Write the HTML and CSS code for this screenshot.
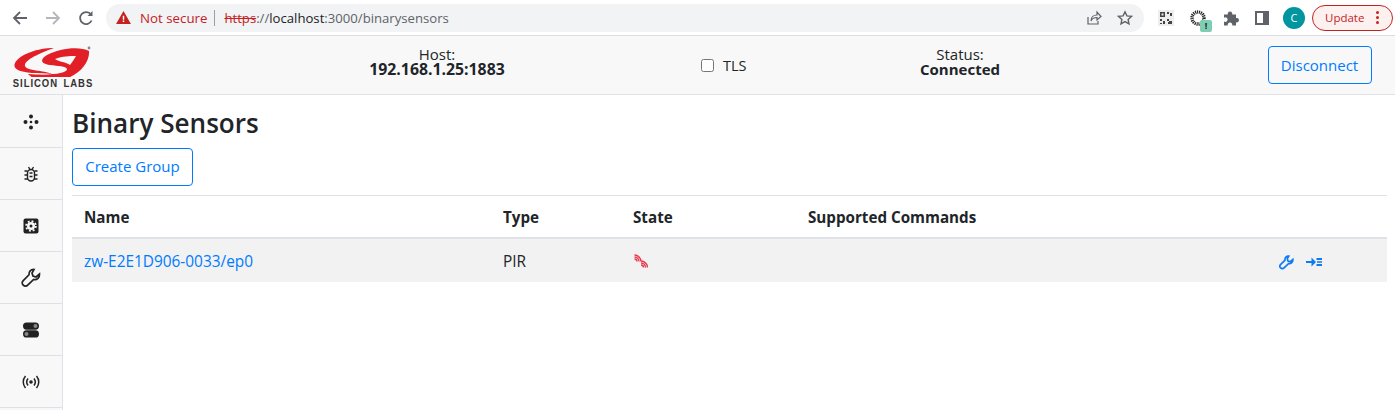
FILE: index.html
```html
<!doctype html>
<html lang="en">
<head>
  <title>Binary Sensors</title>
  <meta charset="utf-8">
  <link rel="stylesheet" href="styles.css">
</head>
<body>

  <div class="toolbar">
    <div class="nav">
      <svg class="navicon" viewBox="0 0 16 16" fill="none" stroke="#5f6368" stroke-width="1.8"><path d="M15 8H2M8 2 2 8l6 6"/></svg>
      <svg class="navicon" viewBox="0 0 16 16" fill="none" stroke="#b4b6b9" stroke-width="1.8"><path d="M1 8h13M8 2l6 6-6 6"/></svg>
      <svg class="navicon" viewBox="0 0 16 16" fill="none" stroke="#5f6368" stroke-width="1.8"><path d="M13.6 10.5A6 6 0 1 1 13 4.6"/><path d="M14.5 1v5h-5" fill="#5f6368" stroke="none"/></svg>
    </div>
    <div class="omnibox">
      <svg class="warn" viewBox="0 0 16 14"><path d="M8 0 16 14H0z" fill="#c5221f"/><path d="M7.2 5h1.6v4.500H7.200zM7.200 10.300h1.600v1.600H7.200z" fill="#fff"/></svg>
      <span class="notsecure">Not secure</span>
      <span class="sep"></span>
      <span class="url"><s class="https">https</s><span class="urlgrey">://</span>localhost<span class="urlgrey">:3000/binarysensors</span></span>
      <span class="spacer"></span>
      <svg class="omniicon" viewBox="0 0 16 16" fill="none" stroke="#5f6368" stroke-width="1.200"><path d="M2 7v7h10v-3"/><path d="M5 11c0-4 3-6 6-6V2l4 4.500L11 10V7.500c-3 0-5 1-6 3.500z"/></svg>
      <svg class="omniicon star" viewBox="0 0 16 16" fill="none" stroke="#5f6368" stroke-width="1.400"><path d="m8 1.800 1.900 4.100 4.500.500-3.300 3 .9 4.400L8 11.600l-4 2.200.9-4.400-3.300-3 4.500-.500z"/></svg>
    </div>
    <div class="extensions">
      <svg class="ext-qr" viewBox="0 0 16 16"><rect width="16" height="16" fill="#eeeeee"/><path d="M2 2h5v5H2zM3.500 3.500v2h2v-2zM9 2h2v2H9zM12 3h2v3h-2zM2 9h2v2H2zM5 11h2v3H5zM2 13h2v1H2zM9 9h2v2H9zM11 11h3v3h-4v-2h1z" fill="#444"/></svg>
      <span class="ext-spin">
        <svg class="ring" viewBox="0 0 16 16" fill="none" stroke="#222" stroke-width="3.400"><circle cx="8" cy="8" r="6" stroke-dasharray="1.100 .8"/></svg>
        <span class="badge">!</span>
      </span>
      <svg class="ext-puzzle" viewBox="0 0 16 16"><path d="M1 4.500h3.800a2.300 2.300 0 1 1 4.400 0H13V8a2.300 2.300 0 1 1 0 4.400V15.500H9.200a2.300 2.300 0 1 0-4.400 0H1V11.500a2.300 2.300 0 1 0 0-3.800z" fill="#5f6368"/></svg>
      <span class="ext-panel"></span>
      <span class="avatar">C</span>
      <span class="update">Update<span class="dots"><i></i><i></i><i></i></span></span>
    </div>
  </div>

  <header class="topbar">
    <div class="logo">
      <svg class="logo-mark" viewBox="0 0 90 34">
        <path d="M46 5C30 5 12 11 7 20c-3 6 5 9 17 10 6 .5 14 0 20 1-8-4-26-3-27-8-1-5 10-11 29-18z" fill="#e21e26"/>
        <path d="M81 8C72 3 52 5 39 12c-7 4-7 9 3 10 8 1 16 1 17 4 1 4-15 7-39 5 6 7 22 9 34 6C70 33 82 20 81 8z" fill="#e21e26"/>
        <path d="M47 16c8-3 14-3 21-3-2 4-6 9-6 9-4-3-11-3-15-6z" fill="#f8f8f8"/>
        <circle cx="81" cy="5" r="1.400" fill="#888"/>
      </svg>
      <span class="logo-text">SILICON LABS</span>
    </div>
    <div class="info host"><span>Host:</span><b>192.168.1.25:1883</b></div>
    <label class="tls"><input type="checkbox"> TLS</label>
    <div class="info status"><span>Status:</span><b>Connected</b></div>
    <a class="btn disconnect">Disconnect</a>
  </header>

  <div class="main">
    <nav class="sidebar">
      <a class="side-item"><svg class="side-icon" viewBox="0 0 16 16" fill="#222"><circle cx="8" cy="2.500" r="2"/><circle cx="8" cy="13.500" r="2"/><circle cx="2.500" cy="8" r="2"/><circle cx="13.500" cy="8" r="2"/><circle cx="8" cy="8" r="1.300"/></svg></a>
      <a class="side-item"><svg class="side-icon" viewBox="0 0 16 16" fill="none" stroke="#222" stroke-width="1.400"><rect x="4.500" y="3.500" width="7" height="11.500" rx="3.500"/><path d="M5.500 1 7 3.500M10.500 1 9 3.500M1.500 5h3M11.500 5h3M1.500 9h3M11.500 9h3M1.500 13h3.500M11 13h3.500M6.500 7h3M6.500 10.500h3"/></svg></a>
      <a class="side-item"><svg class="side-icon" viewBox="0 0 16 16"><rect x="0.500" y="0.500" width="15" height="15" rx="2" fill="#222"/><circle cx="8" cy="8" r="4" fill="#f8f8f8"/><circle cx="8" cy="8" r="4.900" fill="none" stroke="#f8f8f8" stroke-width="1.800" stroke-dasharray="1.920 1.920"/><circle cx="8" cy="8" r="1.500" fill="#222"/></svg></a>
      <a class="side-item"><svg class="side-icon big" viewBox="0 0 20 20" fill="none" stroke="#222" stroke-width="1.700"><path d="M13 1.500C10 1.200 7.500 3.500 8 6.800l-6 6c-1.200 1.200-1 3.200.2 4.400 1.300 1.300 3.300 1.300 4.500 0l6-5.700c3.300.7 6.100-2 5.800-5.500L15 9l-3-1-1-3z"/></svg></a>
      <a class="side-item"><svg class="side-icon" viewBox="0 0 16 16"><rect x="0" y="0.500" width="16" height="7.200" rx="3.600" fill="#222"/><circle cx="12.500" cy="4" r="2" fill="#888"/><rect x="0" y="8.300" width="16" height="7.200" rx="3.600" fill="#222"/><circle cx="3.500" cy="12" r="2" fill="#888"/></svg></a>
      <a class="side-item"><svg class="side-icon wide" viewBox="0 0 18 14" fill="none" stroke="#222" stroke-width="1.500"><circle cx="9" cy="7" r="1.800" fill="#222" stroke="none"/><path d="M6 3.500c-1.500 2-1.500 5 0 7M12 3.500c1.500 2 1.500 5 0 7M3.500 1c-3 3.500-3 8.500 0 12M14.500 1c3 3.500 3 8.500 0 12"/></svg></a>
    </nav>

    <section class="content">
      <h1 class="title">Binary Sensors</h1>
      <a class="btn create">Create Group</a>
      <table class="sensors">
        <thead>
          <tr>
            <th class="col-name">Name</th>
            <th class="col-type">Type</th>
            <th class="col-state">State</th>
            <th class="col-cmds">Supported Commands</th>
            <th class="col-act"></th>
          </tr>
        </thead>
        <tbody>
          <tr>
            <td><a class="link">zw-E2E1D906-0033/ep0</a></td>
            <td>PIR</td>
            <td>
              <svg class="state-icon" viewBox="0 0 14 14" fill="none" stroke="#e8394c" stroke-width="1.400"><path d="M.5 5a2.500 2.500 0 0 1 2.500 2.500M.5 3A4.500 4.500 0 0 1 5 7.500M.5 1A6.500 6.500 0 0 1 7 7.500M7 11a2.500 2.500 0 0 1 2.500 2.500M7 9a4.500 4.500 0 0 1 4.500 4.500M7 7a6.500 6.500 0 0 1 6.500 6.500"/></svg>
            </td>
            <td></td>
            <td class="actions">
              <svg class="act-icon wrench" viewBox="0 0 20 20" fill="none" stroke="#0d7bf2" stroke-width="2.200"><path d="M13 1.500C10 1.200 7.500 3.500 8 6.800l-6 6c-1.200 1.200-1 3.200.2 4.400 1.300 1.300 3.300 1.300 4.500 0l6-5.700c3.300.7 6.100-2 5.800-5.500L15 9l-3-1-1-3z"/></svg>
              <svg class="act-icon" viewBox="0 0 16 16" fill="#0d7bf2"><path d="M0 7h5.500V3.500L10 8l-4.500 4.500V9H0zM10.500 4h5.500v2h-5.500zM11 7.200h5v1.600h-5zM10.500 10h5.500v2h-5.500z"/></svg>
            </td>
          </tr>
        </tbody>
      </table>
    </section>
  </div>

</body>
</html>
```

FILE: styles.css
```css
html, body {
  margin: 0;
  padding: 0;
}
body {
  width: 1395px;
  height: 410px;
  overflow: hidden;
  background: #fff;
  color: #212529;
  font: 16px "Open Sans", "Noto Sans", sans-serif;
}

/* browser chrome */
.toolbar {
  display: flex;
  align-items: center;
  height: 35px;
  border-bottom: 1px solid #dadce0;
  box-sizing: content-box;
  background: #fff;
}
.nav {
  display: flex;
  gap: 17px;
  padding-left: 12px;
  width: 94px;
  box-sizing: border-box;
}
.navicon {
  width: 16px;
  height: 16px;
}
.omnibox {
  display: flex;
  align-items: center;
  width: 1038px;
  height: 28px;
  margin-left: 12px;
  padding: 0 10px;
  box-sizing: border-box;
  border-radius: 14px;
  background: #f1f3f4;
  font-size: 13.300px;
}
.warn {
  width: 15px;
  height: 13px;
  margin-right: 9px;
  flex: none;
}
.notsecure {
  color: #c5221f;
}
.sep {
  width: 1px;
  height: 16px;
  margin: 0 9px 0 7px;
  background: #9aa0a6;
}
.https {
  color: #c5221f;
}
.url {
  color: #202124;
  font-size: 13.150px;
}
.urlgrey {
  color: #5f6368;
}
.spacer {
  flex: 1;
}
.omniicon {
  width: 16px;
  height: 16px;
  margin-right: 15px;
}
.omniicon.star {
  margin-right: 1px;
}
.extensions {
  display: flex;
  align-items: center;
  padding-left: 14px;
}
.ext-qr {
  width: 16px;
  height: 16px;
  margin-right: 16px;
}
.ext-spin {
  position: relative;
  width: 16px;
  height: 16px;
  margin-right: 17px;
}
.ring {
  display: block;
  width: 16px;
  height: 16px;
}
.badge {
  position: absolute;
  left: 10px;
  top: 10px;
  width: 12px;
  height: 12px;
  border-radius: 2px;
  background: #7fcdb3;
  color: #222;
  font: bold 9px/12px "Open Sans", sans-serif;
  text-align: center;
}
.ext-puzzle {
  width: 16px;
  height: 16px;
  margin-right: 16px;
}
.ext-panel {
  width: 14px;
  height: 14px;
  margin-right: 14px;
  box-sizing: border-box;
  border: 2px solid #5f6368;
  border-right-width: 6px;
}
.avatar {
  width: 22px;
  height: 22px;
  margin-right: 7px;
  border-radius: 50%;
  background: #00959f;
  color: #fff;
  font-size: 11px;
  line-height: 22px;
  text-align: center;
}
.update {
  display: flex;
  align-items: center;
  width: 81px;
  height: 26px;
  box-sizing: border-box;
  padding-left: 12px;
  border: 1px solid #c5221f;
  border-radius: 13px;
  background: #fdf1f0;
  color: #c5221f;
  font-size: 11.500px;
}
.dots {
  display: flex;
  flex-direction: column;
  gap: 2px;
  margin-left: 12px;
}
.dots i {
  width: 3px;
  height: 3px;
  border-radius: 50%;
  background: #c5221f;
}

/* app header */
.topbar {
  display: flex;
  align-items: center;
  height: 58px;
  border-bottom: 1px solid #dee2e6;
  background: #f8f8f8;
}
.logo {
  display: flex;
  flex-direction: column;
  align-items: center;
  width: 90px;
  margin-left: 8px;
}
.logo-mark {
  width: 90px;
  height: 34px;
}
.logo-text {
  color: #333;
  font: bold 9.500px/11px "Liberation Sans", sans-serif;
  letter-spacing: .95px;
  word-spacing: 2px;
  white-space: nowrap;
  transform: scaleY(1.150);
}
.info {
  display: flex;
  flex-direction: column;
  align-items: center;
  margin-bottom: 6px;
  font-size: 15px;
  line-height: 15px;
}
.info b {
  font-size: 15px;
}
.host {
  width: 140px;
  margin-left: 269px;
}
.host b {
  font-size: 15.800px;
}
.tls {
  display: flex;
  align-items: center;
  gap: 9px;
  margin-left: 194px;
  font-size: 14.500px;
}
.tls input {
  width: 13px;
  height: 13px;
  margin: 0;
}
.status {
  width: 90px;
  margin-left: 168.500px;
}
.btn {
  display: inline-block;
  box-sizing: border-box;
  height: 38px;
  border: 1px solid #007bff;
  border-radius: 4px;
  color: #007bff;
  background: transparent;
  font-size: 15px;
  line-height: 36px;
  text-align: center;
}
.disconnect {
  width: 104px;
  margin-left: 262.500px;
}

/* body */
.main {
  display: flex;
  height: 315px;
}
.sidebar {
  flex: none;
  width: 62px;
  padding-top: 1px;
  border-right: 1px solid #dee2e6;
  background: #f8f8f8;
}
.side-item {
  display: flex;
  align-items: center;
  justify-content: center;
  box-sizing: border-box;
  height: 52px;
  border-bottom: 1px solid #dee2e6;
}
.side-icon {
  width: 16px;
  height: 16px;
}
.side-icon.big {
  width: 20px;
  height: 20px;
}
.side-icon.wide {
  width: 18px;
  height: 14px;
}
.content {
  flex: 1;
  padding: 0 8px 0 9px;
}
.title {
  margin: 9px 0 5px;
  font-size: 26.100px;
  font-weight: 600;
  line-height: 39px;
}
.create {
  display: block;
  width: 121px;
  line-height: 34px;
}
.sensors {
  width: 100%;
  margin-top: 9px;
  border-collapse: collapse;
  border-top: 1px solid #dee2e6;
  font-size: 15.400px;
  table-layout: fixed;
}
.sensors th {
  height: 41px;
  padding: 0 12px;
  border-bottom: 2px solid #dee2e6;
  font-size: 15.200px;
  font-weight: 700;
  text-align: left;
}
.sensors td {
  height: 42px;
  padding: 1px 12px 0;
  background: #f2f2f2;
}
.col-name { width: 395px; }
.col-type { width: 106px; }
.col-state { width: 151px; }
.col-cmds { width: 447px; }
.link {
  color: #007bff;
}
.state-icon {
  display: block;
  width: 14px;
  height: 14px;
  margin-left: 1px;
}
.actions {
  white-space: nowrap;
}
.act-icon {
  width: 16px;
  height: 16px;
  margin-right: 8px;
  vertical-align: middle;
}
.act-icon.wrench {
  width: 15px;
  height: 15px;
}
```
